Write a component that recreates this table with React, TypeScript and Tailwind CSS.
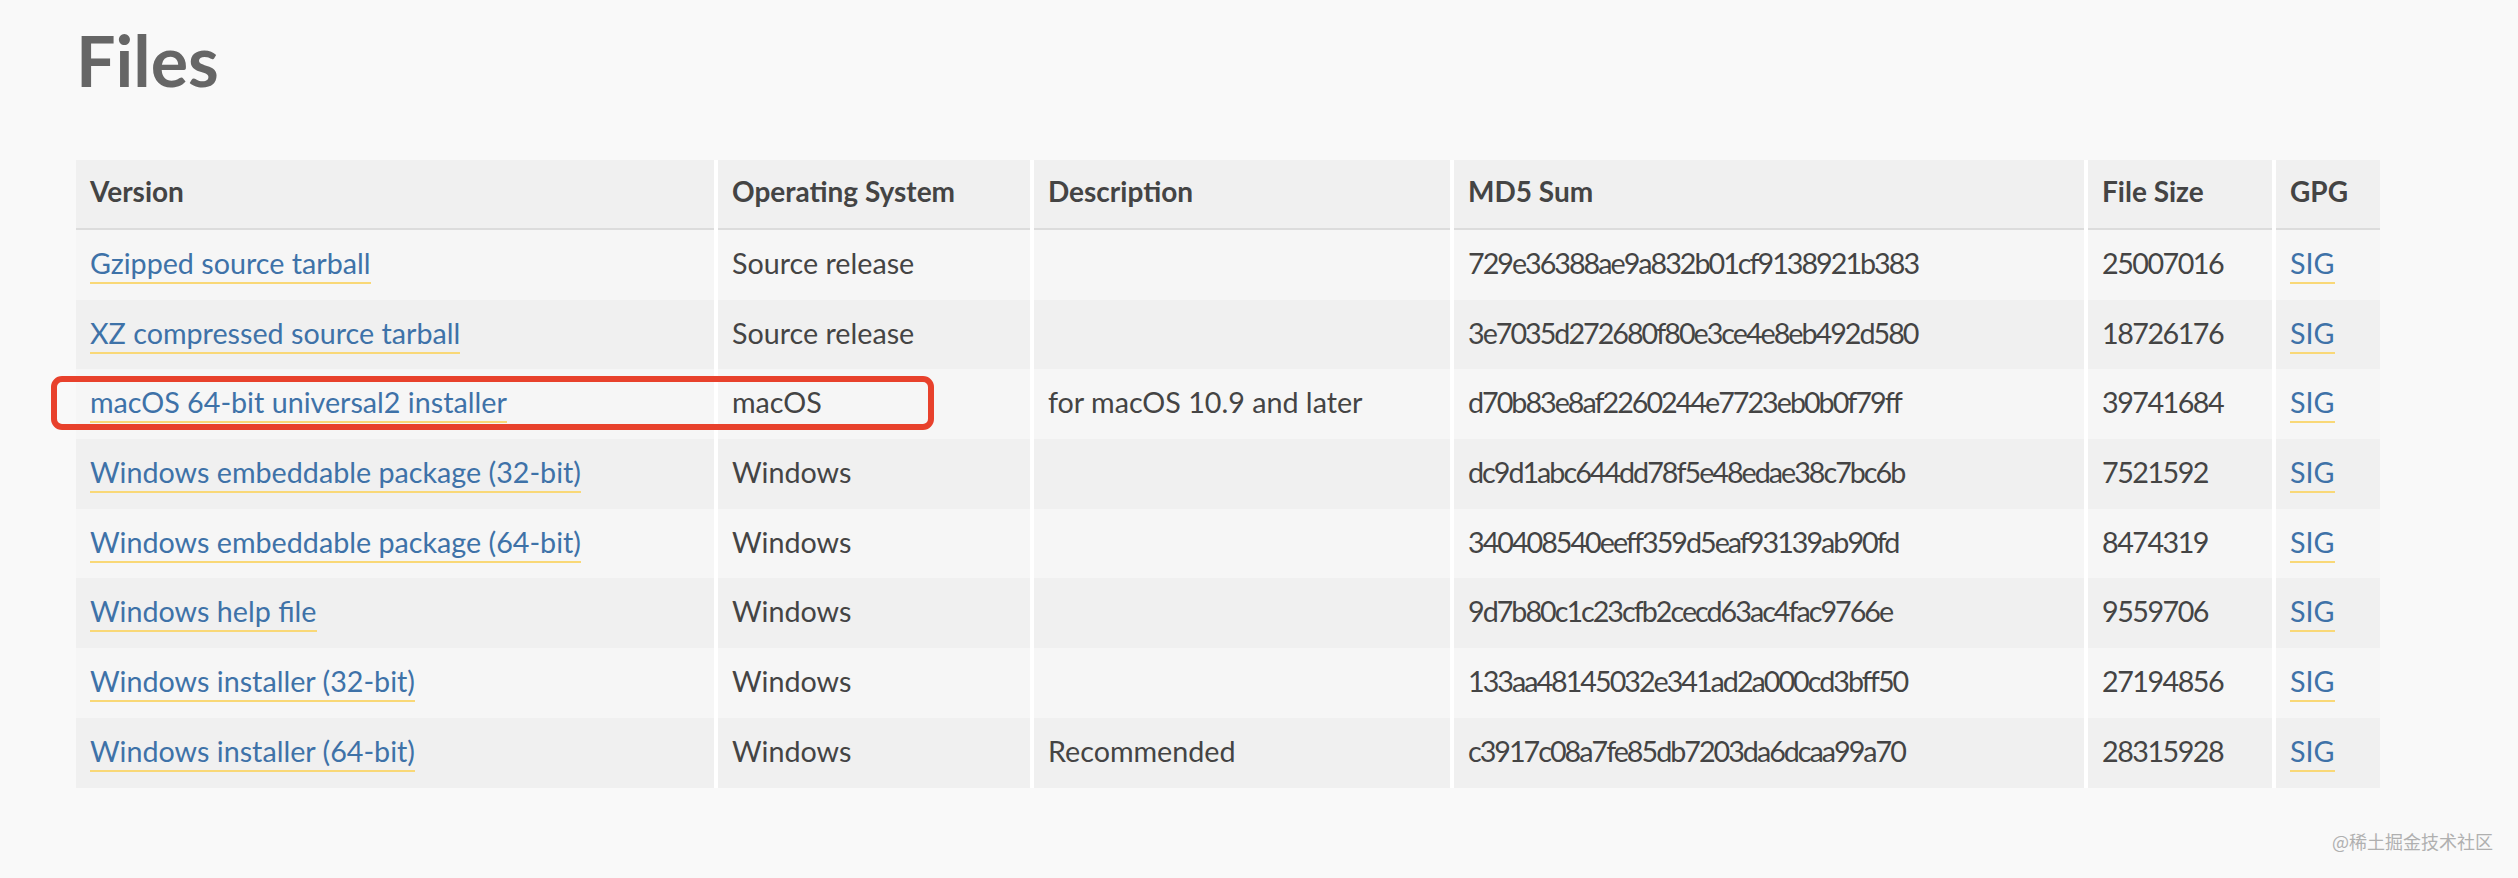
import React from "react";

type FileRow = {
  version: string;
  os: string;
  description: string;
  md5: string;
  size: string;
};

const files: FileRow[] = [
  { version: "Gzipped source tarball", os: "Source release", description: "", md5: "729e36388ae9a832b01cf9138921b383", size: "25007016" },
  { version: "XZ compressed source tarball", os: "Source release", description: "", md5: "3e7035d272680f80e3ce4e8eb492d580", size: "18726176" },
  { version: "macOS 64-bit universal2 installer", os: "macOS", description: "for macOS 10.9 and later", md5: "d70b83e8af2260244e7723eb0b0f79ff", size: "39741684" },
  { version: "Windows embeddable package (32-bit)", os: "Windows", description: "", md5: "dc9d1abc644dd78f5e48edae38c7bc6b", size: "7521592" },
  { version: "Windows embeddable package (64-bit)", os: "Windows", description: "", md5: "340408540eeff359d5eaf93139ab90fd", size: "8474319" },
  { version: "Windows help file", os: "Windows", description: "", md5: "9d7b80c1c23cfb2cecd63ac4fac9766e", size: "9559706" },
  { version: "Windows installer (32-bit)", os: "Windows", description: "", md5: "133aa48145032e341ad2a000cd3bff50", size: "27194856" },
  { version: "Windows installer (64-bit)", os: "Windows", description: "Recommended", md5: "c3917c08a7fe85db7203da6dcaa99a70", size: "28315928" },
];

const headers = ["Version", "Operating System", "Description", "MD5 Sum", "File Size", "GPG"];

const Link: React.FC<{ children: React.ReactNode }> = ({ children }) => (
  <a href="#" className="text-[#3e72a8] border-b-2 border-[#f9d877] pb-[2px]">
    {children}
  </a>
);

export default function App() {
  return (
    <div className="relative w-full h-[878px] bg-[#f9f9f9] pl-[76px] pt-[25px] font-[Lato,sans-serif] text-[#444]">
      {/* Title */}
      <h1 className="text-[70px] leading-none font-bold text-[#666]">Files</h1>

      {/* Files table */}
      <div className="mt-[65px] grid w-fit grid-cols-[638px_312px_416px_630px_184px_104px] gap-x-[4px] bg-white">
        {headers.map((h) => (
          <div
            key={h}
            className="h-[70px] bg-[#f0f0f0] border-b-2 border-[#dcdcdc] pl-[14px] pt-[17px] text-[28px] leading-[29px] font-bold text-[#444]"
          >
            {h}
          </div>
        ))}

        {files.map((f, i) => {
          const bg = i % 2 === 0 ? "bg-[#f6f6f6]" : "bg-[#f0f0f0]";
          const cell = `h-[69.7px] pl-[14px] pt-[19px] text-[28.7px] leading-[29px] whitespace-nowrap ${bg}`;
          return (
            <React.Fragment key={f.md5}>
              <div className={cell}>
                <Link>{f.version}</Link>
              </div>
              <div className={cell}>{f.os}</div>
              <div className={cell}>{f.description}</div>
              <div className={`${cell} tracking-[-2px]`}>{f.md5}</div>
              <div className={`${cell} tracking-[-1.5px]`}>{f.size}</div>
              <div className={cell}>
                <Link>SIG</Link>
              </div>
            </React.Fragment>
          );
        })}
      </div>

      {/* Red annotation box */}
      <div className="absolute left-[51px] top-[376px] w-[883px] h-[54px] border-[6px] border-[#e8412c] rounded-[11px]"></div>

      {/* Watermark */}
      <div className="absolute right-[25px] top-[832px] text-[18px] leading-none text-[#b0b0b0] font-['Noto_Sans_CJK_SC',sans-serif]">
        @稀土掘金技术社区
      </div>
    </div>
  );
}
